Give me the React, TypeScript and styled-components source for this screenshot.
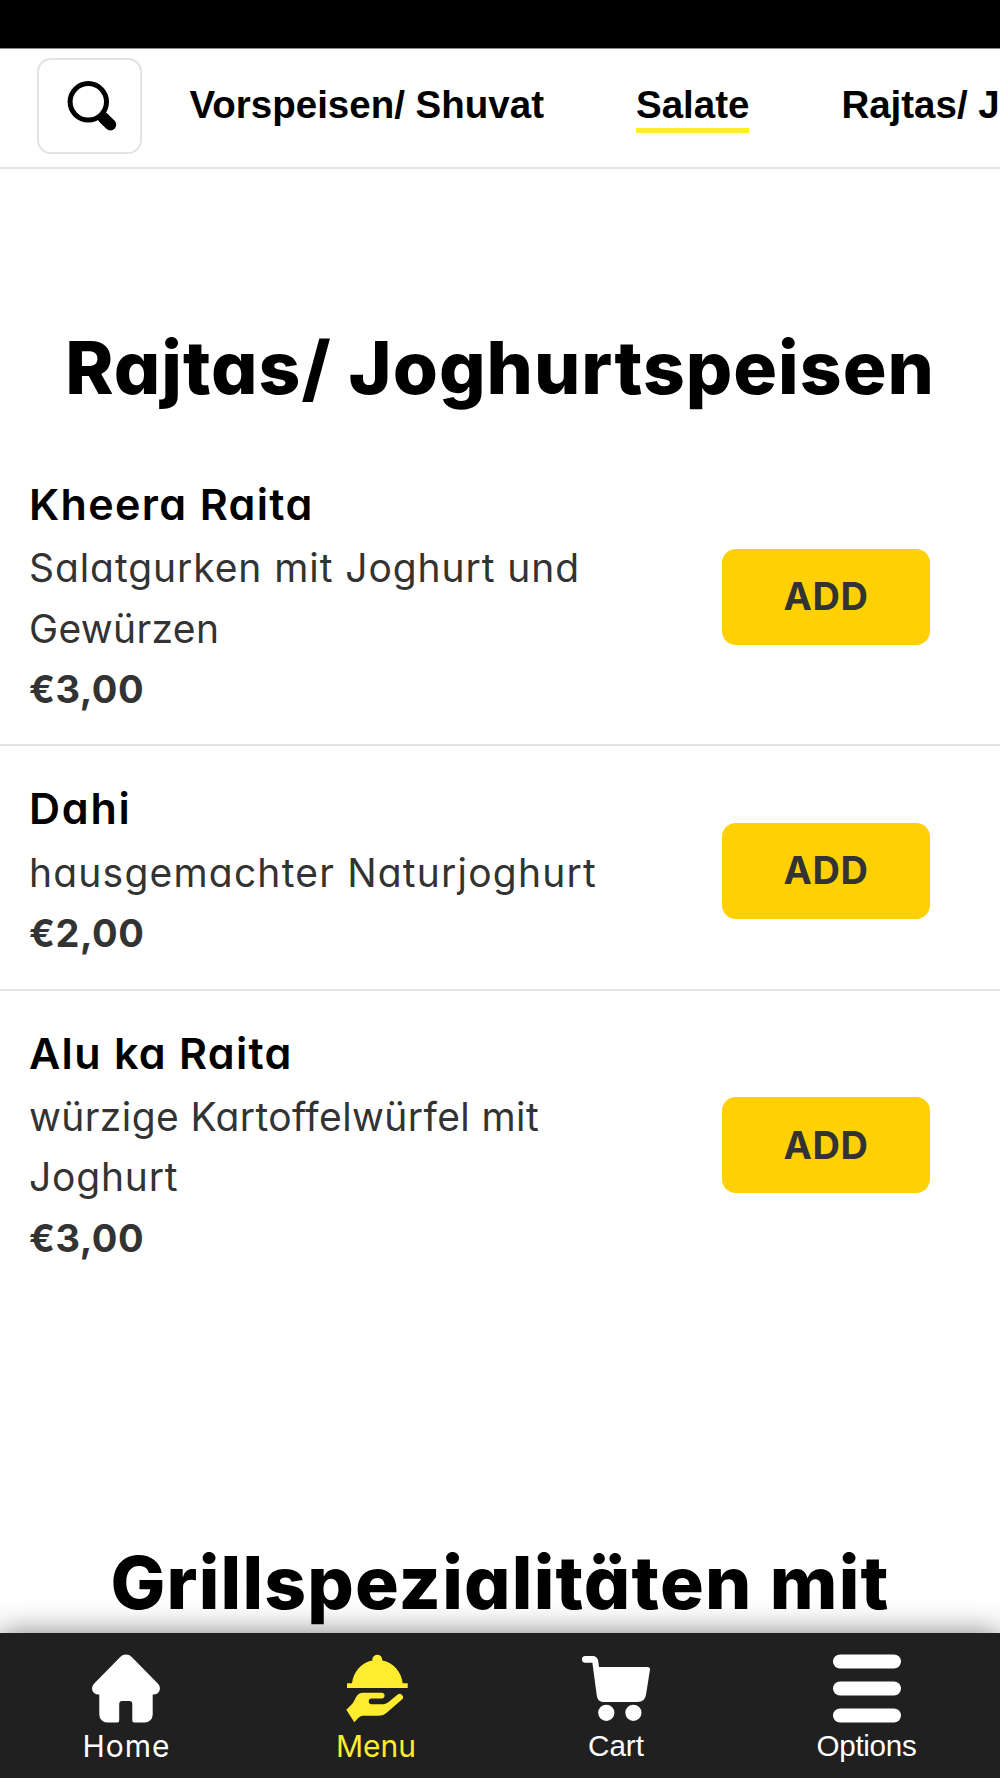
import React from "react";
import styled, { createGlobalStyle, css } from "styled-components";

const GlobalStyle = createGlobalStyle`
  *, *::before, *::after { box-sizing: border-box; }
  body { margin: 0; background: #fff; }
`;

const geometric = css`
  font-family: Inter, "Noto Sans", sans-serif;
  font-feature-settings: "cv11";
`;
const grotesque = css`
  font-family: "Liberation Sans", Arial, sans-serif;
`;

const Screen = styled.div`
  width: 1000px;
  height: 1778px;
  display: flex;
  flex-direction: column;
  overflow: hidden;
  background: #fff;
  color: #000;
  ${geometric}
`;

const StatusBar = styled.div`
  flex: none;
  height: 49px;
  background: #000;
  border-bottom: 1px solid #8c8c8c;
`;

const Header = styled.header`
  flex: none;
  height: 120px;
  display: flex;
  align-items: center;
  padding: 0 0 4px 37px;
  border-bottom: 2px solid #e3e3e3;
  overflow: hidden;
`;

const SearchButton = styled.button`
  flex: none;
  width: 105px;
  height: 96px;
  padding: 0 0 0 5px;
  display: flex;
  align-items: center;
  justify-content: center;
  background: #fff;
  border: 2px solid #e3e3e3;
  border-radius: 14px;
`;

const Categories = styled.nav`
  display: flex;
  gap: 92px;
  margin-left: 47.5px;
  padding-top: 3px;
`;

const Category = styled.a<{ $active?: boolean }>`
  flex: none;
  ${grotesque}
  font-size: 38.5px;
  font-weight: 700;
  line-height: 46px;
  white-space: nowrap;
  border-bottom: 5px solid ${(p) => (p.$active ? "#ffec2e" : "transparent")};
`;

const Content = styled.main`
  flex: 1;
  min-height: 0;
  overflow: hidden;
`;

const Section = styled.section`
  padding: 149px 0 91px;
`;

const SectionTitle = styled.h2<{ $tracking: number }>`
  margin: 0 0 24px;
  text-align: center;
  font-size: 73px;
  font-weight: 800;
  line-height: 100px;
  letter-spacing: ${(p) => p.$tracking}px;
  white-space: nowrap;
`;

const DishRow = styled.article`
  display: flex;
  align-items: center;
  justify-content: space-between;
  padding: 30px 70px 25.2px 29px;

  & + & {
    border-top: 2px solid #e3e3e3;
  }
`;

const DishInfo = styled.div`
  width: 640px;
`;

const DishName = styled.h3<{ $tracking: number }>`
  margin: 0 0 2.4px;
  font-size: 43px;
  font-weight: 600;
  line-height: 64px;
  letter-spacing: ${(p) => p.$tracking}px;
`;

const Description = styled.p`
  margin: 0;
  font-size: 39px;
  line-height: 60.3px;
  color: #333;
`;

const DescriptionLine = styled.span<{ $tracking: number }>`
  display: block;
  letter-spacing: ${(p) => p.$tracking}px;
`;

const Price = styled.div`
  font-size: 38px;
  font-weight: 700;
  line-height: 60.3px;
  letter-spacing: 0.5px;
  color: #333;
`;

const AddButton = styled.button`
  flex: none;
  width: 208px;
  height: 96px;
  margin-top: 2px;
  padding: 0 0 1px;
  border: 0;
  border-radius: 14px;
  background: #ffd004;
  color: #333;
  ${geometric}
  font-size: 38px;
  font-weight: 700;
  letter-spacing: 0.5px;
`;

const TabBar = styled.nav`
  flex: none;
  position: relative;
  height: 145px;
  display: flex;
  justify-content: space-around;
  padding-top: 22px;
  background: #202020;
  box-shadow: 0 0 28px rgba(0, 0, 0, 0.5);
`;

const Tab = styled.a<{ $width: number; $active?: boolean }>`
  width: ${(p) => p.$width}px;
  display: flex;
  flex-direction: column;
  align-items: center;
  gap: 5px;
  color: ${(p) => (p.$active ? "#ffec2e" : "#fff")};
`;

const TabLabel = styled.span<{ $tracking: number; $grotesque?: boolean }>`
  font-size: 30px;
  line-height: 36px;
  letter-spacing: ${(p) => p.$tracking}px;
  ${(p) =>
    p.$grotesque &&
    css`
      ${grotesque}
      font-size: 29.6px;
    `}
`;

const SearchIcon = () => (
  <svg width="52" height="52" viewBox="0 0 52 52" fill="none" stroke="#000">
    <circle cx="22.3" cy="21.8" r="18.2" strokeWidth="5" />
    <path d="M33.8 34.2l5 5" strokeWidth="11" />
    <path d="M38.2 38.6l6.2 6" strokeWidth="11.6" strokeLinecap="round" />
  </svg>
);

const HomeIcon = () => (
  <svg width="68" height="68" viewBox="1 0.5 68 68" fill="currentColor" overflow="visible">
    <path d="M28.5 2.2C31.5-.7 36.5-.7 39.5 2.2L66 29.2C70 33.5 67.5 40 61.5 40H60.7V60A8 8 0 0 1 52.7 68H42.5A2 2 0 0 1 40.3 66V49.5A3 3 0 0 0 37.3 46.5H30.2A3 3 0 0 0 27.2 49.5V66A2 2 0 0 1 25 68H15.3A8 8 0 0 1 7.3 60V40H6.5C.5 40-2 33.5 2 29.2Z" />
  </svg>
);

const MenuIcon = () => (
  <svg width="62" height="68" viewBox="-1 0.5 62 68" fill="currentColor" overflow="visible">
    <path d="M1 28.8H6C7.5 17 15.5 8 26.3 6V5.2A5 5 0 0 1 36.3 5.2V6C47.3 8 55.3 17 56.7 28.8H61.7V33.5H1Z" />
    <path d="M.3 55.2L6.3 49.2C8 47 9 44.5 10.3 42.2C11.8 39.6 14 38.2 17 38.2H36.3A2.9 2.9 0 0 1 36.3 43.9H25.6A2.9 2.9 0 0 0 25.6 49.7H35.7C38.5 49.7 40.5 49.2 42.6 47.4L51.7 40.1A3.4 3.4 0 0 1 56.8 44.3L41.5 57.4C38.5 60 36 61.2 32.3 61.2H18.5C15.5 61.2 14 61.8 12.2 63.5L8.3 67.8Z" />
  </svg>
);

const CartIcon = () => (
  <svg width="68" height="68" viewBox="0 -1 68 68" fill="currentColor">
    <path d="M3.3 0H10.5C14.3 0 16 2.5 16.4 6L17 11H65.5Q68.3 11 68 13.6L64.2 37.5C63.3 43.2 60.8 46 55.3 46H22C17.5 46 15.2 43.5 14.7 39L10.4 6.7H3.3A3.35 3.35 0 0 1 3.3 0Z" />
    <circle cx="24.3" cy="56.8" r="8.1" />
    <circle cx="51.4" cy="56.8" r="8.1" />
  </svg>
);

const OptionsIcon = () => (
  <svg width="68" height="68" viewBox="0 0.5 68 68" fill="currentColor" overflow="visible">
    <rect y="0" width="68" height="14" rx="7" />
    <rect y="27" width="68" height="14" rx="7" />
    <rect y="54" width="68" height="14" rx="7" />
  </svg>
);

type Line = { text: string; tracking: number };
type Dish = { name: Line; description: Line[]; price: string };

const dishes: Dish[] = [
  {
    name: { text: "Kheera Raita", tracking: 1.35 },
    description: [
      { text: "Salatgurken mit Joghurt und", tracking: 0.92 },
      { text: "Gewürzen", tracking: 0.35 },
    ],
    price: "€3,00",
  },
  {
    name: { text: "Dahi", tracking: 1.8 },
    description: [{ text: "hausgemachter Naturjoghurt", tracking: 1.2 }],
    price: "€2,00",
  },
  {
    name: { text: "Alu ka Raita", tracking: 1.3 },
    description: [
      { text: "würzige Kartoffelwürfel mit", tracking: 0.4 },
      { text: "Joghurt", tracking: 0.8 },
    ],
    price: "€3,00",
  },
];

const tabs = [
  { label: "Home", icon: <HomeIcon />, width: 87, tracking: 1 },
  { label: "Menu", icon: <MenuIcon />, width: 80, tracking: 0, active: true },
  { label: "Cart", icon: <CartIcon />, width: 68, tracking: 0, grotesque: true },
  { label: "Options", icon: <OptionsIcon />, width: 101, tracking: -0.3, grotesque: true },
];

export default function App() {
  return (
    <Screen>
      <GlobalStyle />
      <StatusBar />
      <Header>
        <SearchButton aria-label="Suche">
          <SearchIcon />
        </SearchButton>
        <Categories>
          <Category>Vorspeisen/ Shuvat</Category>
          <Category $active>Salate</Category>
          <Category>Rajtas/ Joghurtspeisen</Category>
        </Categories>
      </Header>
      <Content>
        <Section>
          <SectionTitle $tracking={1}>Rajtas/ Joghurtspeisen</SectionTitle>
          {dishes.map((dish) => (
            <DishRow key={dish.name.text}>
              <DishInfo>
                <DishName $tracking={dish.name.tracking}>{dish.name.text}</DishName>
                <Description>
                  {dish.description.map((line) => (
                    <DescriptionLine key={line.text} $tracking={line.tracking}>
                      {line.text}
                    </DescriptionLine>
                  ))}
                </Description>
                <Price>{dish.price}</Price>
              </DishInfo>
              <AddButton>ADD</AddButton>
            </DishRow>
          ))}
        </Section>
        <Section>
          <SectionTitle $tracking={1.2}>Grillspezialitäten mit</SectionTitle>
        </Section>
      </Content>
      <TabBar>
        {tabs.map((tab) => (
          <Tab key={tab.label} $width={tab.width} $active={tab.active}>
            {tab.icon}
            <TabLabel $tracking={tab.tracking} $grotesque={tab.grotesque}>
              {tab.label}
            </TabLabel>
          </Tab>
        ))}
      </TabBar>
    </Screen>
  );
}
